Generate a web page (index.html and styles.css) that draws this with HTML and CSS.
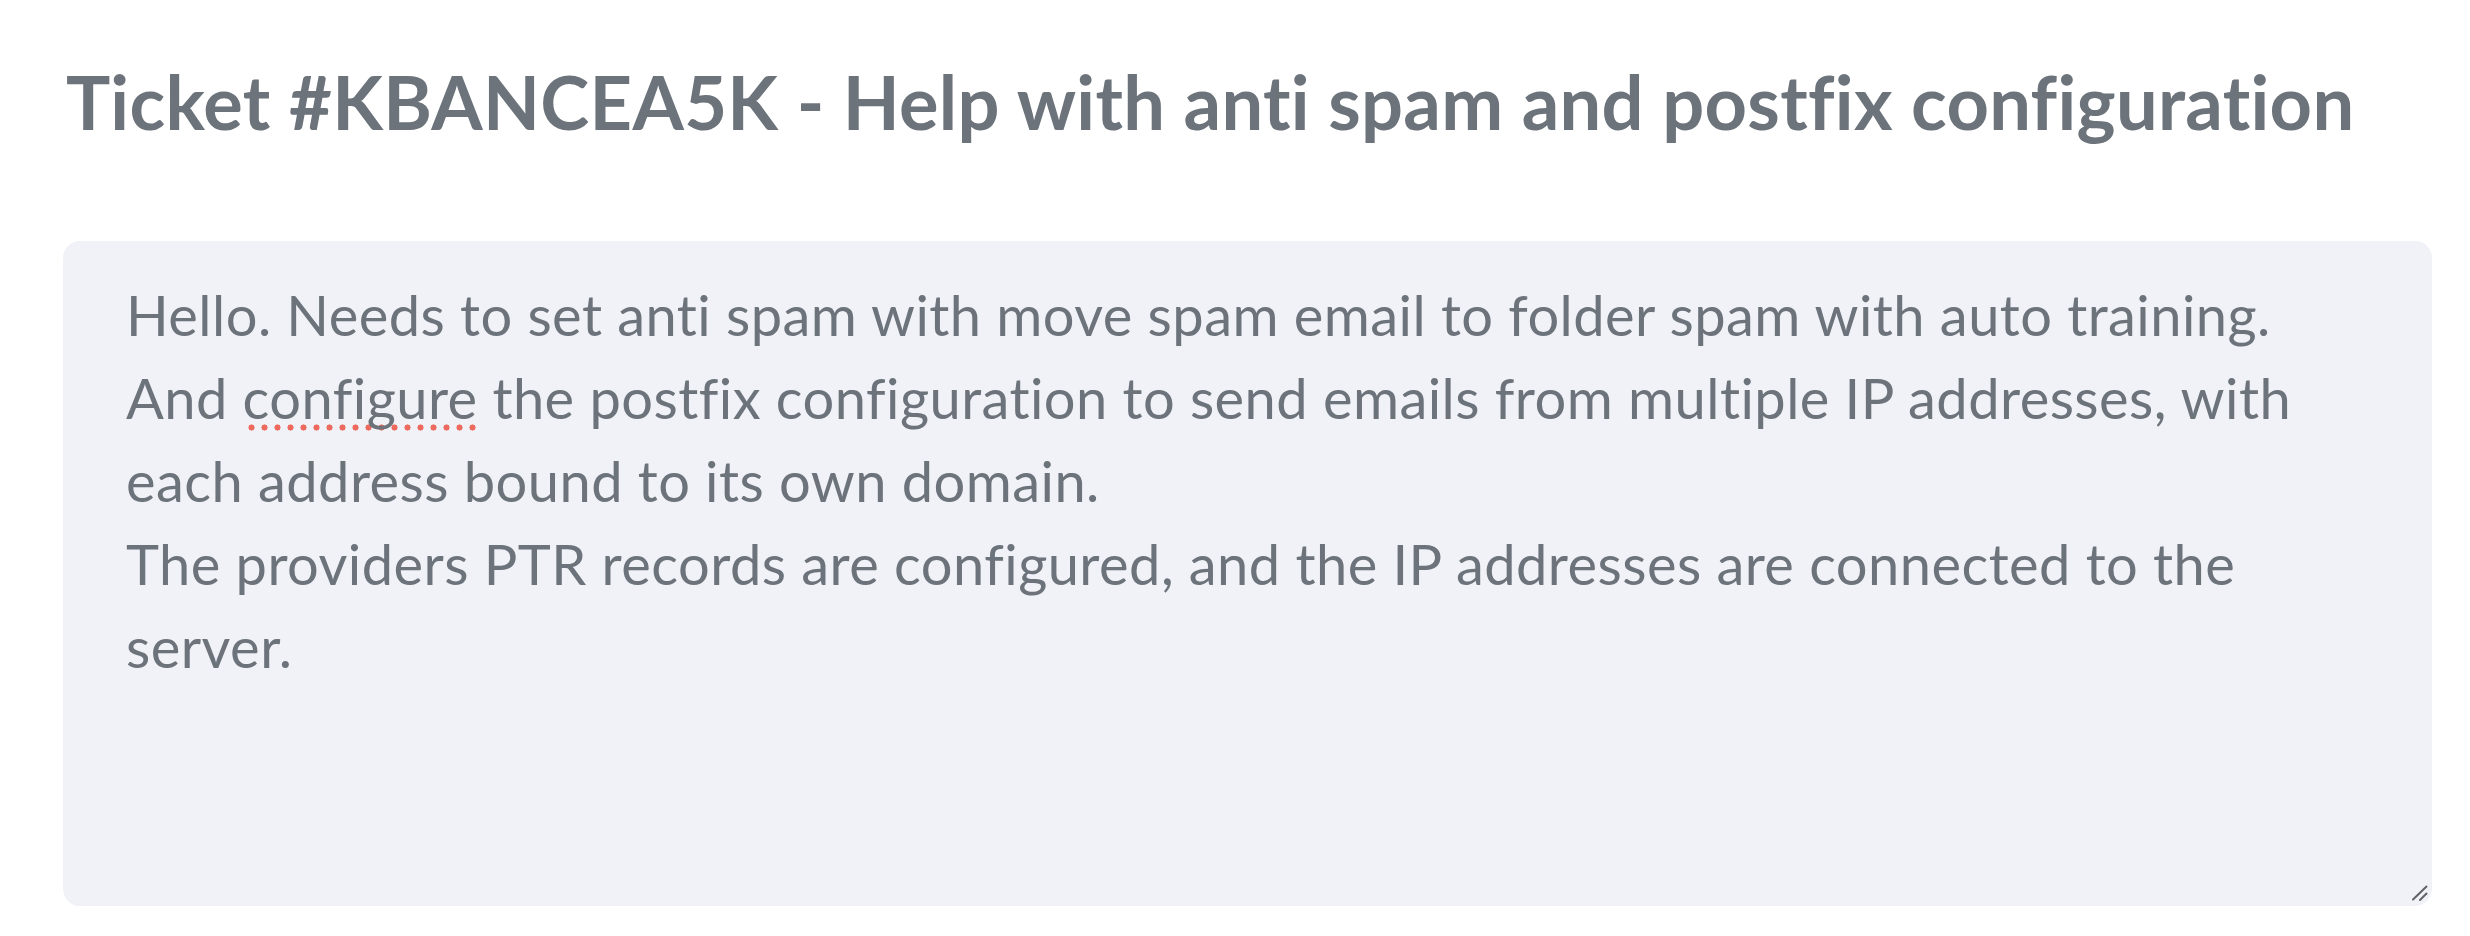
FILE: index.html
```html
<!DOCTYPE html>
<html lang="en">
<head>
<meta charset="utf-8">
<title>Ticket #KBANCEA5K</title>
<link rel="stylesheet" href="styles.css">
</head>
<body>
<main class="page">
  <h1 class="title">Ticket #KBANCEA5K - Help with anti spam and postfix configuration</h1>
  <div class="message" role="textbox" aria-multiline="true">
    <div class="line">Hello. Needs to set anti spam with move spam email to folder spam with auto training.</div>
    <div class="line">And <span class="misspelled">configure</span> the postfix configuration to send emails from multiple IP addresses, with</div>
    <div class="line">each address bound to its own domain.</div>
    <div class="line">The providers PTR records are configured, and the IP addresses are connected to the</div>
    <div class="line">server.</div>
    <svg class="grip" width="24" height="24" viewBox="0 0 24 24" aria-hidden="true">
      <line x1="5" y1="17.5" x2="18.5" y2="4.5" stroke="#5f6368" stroke-width="2" stroke-linecap="round"/>
      <line x1="12" y1="18" x2="18.5" y2="11.5" stroke="#5f6368" stroke-width="2" stroke-linecap="round"/>
    </svg>
  </div>
</main>
</body>
</html>
```
FILE: styles.css
```css
html, body {
  margin: 0;
  padding: 0;
  background: #ffffff;
}

.page {
  padding: 58px 38px 30px 63px;
  display: flex;
  flex-direction: column;
  gap: 94px;
  font-family: Lato, "Noto Sans", sans-serif;
  font-variant-ligatures: none;
  color: #6c737b;
}

.title {
  margin: 0;
  font-size: 74px;
  line-height: 1.2;
  font-weight: 700;
  letter-spacing: 0.3px;
  color: #6c737b;
  padding-left: 3px;
}

.message {
  position: relative;
  box-sizing: border-box;
  height: 665px;
  background: #f1f2f7;
  border-radius: 17px;
  padding: 32px 63px;
  font-size: 56px;
  line-height: 83px;
  letter-spacing: 0.45px;
  font-weight: 400;
  color: #6c737b;
}

.line {
  white-space: nowrap;
}

.misspelled {
  background-image: radial-gradient(circle, #ec6a5e 2.8px, rgba(236,106,94,0) 3.3px);
  background-size: 13px 7px;
  background-repeat: repeat-x;
  background-position: 2px calc(100% - 0px);
}

.grip {
  position: absolute;
  right: 0;
  bottom: 0;
}
```
